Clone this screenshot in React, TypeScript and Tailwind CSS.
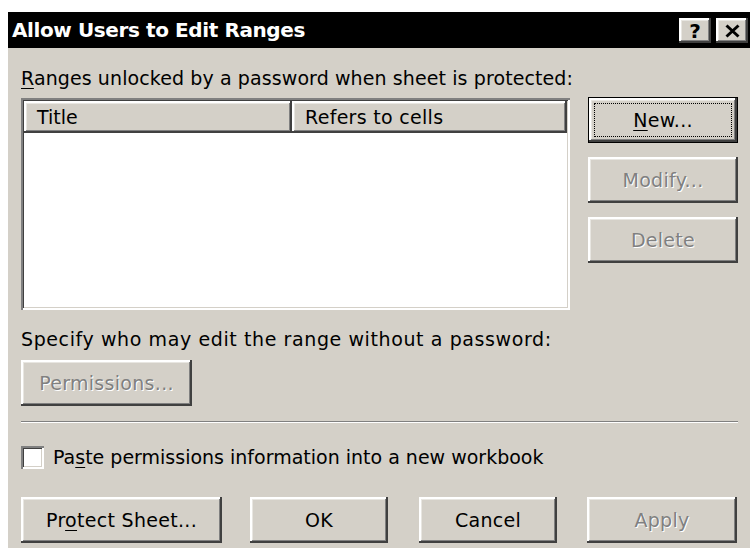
import React from "react";

const font = { fontFamily: '"DejaVu Sans", Verdana, sans-serif' };

// Classic raised 3D bevel used by dialog buttons
const raised =
  "bg-[#d4d0c8] shadow-[inset_-2px_-2px_0_#404040,inset_2px_2px_0_#ffffff,inset_-3px_-3px_0_#808080,inset_3px_3px_0_#e8e6e1]";

// Sunken bevel used by the list view and the check box
const sunken =
  "shadow-[inset_2px_2px_0_#808080,inset_-2px_-2px_0_#ffffff,inset_3px_3px_0_#404040,inset_-3px_-3px_0_#d4d0c8]";

function Btn({
  children,
  w,
  disabled,
  isDefault,
}: {
  children: React.ReactNode;
  w: string;
  disabled?: boolean;
  isDefault?: boolean;
}) {
  const text = disabled
    ? "text-[#808080] [text-shadow:1px_1px_0_#ffffff]"
    : "text-black";
  if (isDefault) {
    return (
      <div className={`${w} h-[46px] border border-black`}>
        <div className={`${raised} w-full h-full p-[5px]`}>
          <div
            className={`w-full h-full border border-dotted border-black flex items-center justify-center text-[19px] tracking-[0.3px] ${text}`}
          >
            {children}
          </div>
        </div>
      </div>
    );
  }
  return (
    <div
      className={`${raised} ${w} h-[46px] flex items-center justify-center text-[19px] tracking-[0.3px] ${text}`}
    >
      {children}
    </div>
  );
}

function CaptionBtn({ children }: { children: React.ReactNode }) {
  return (
    <div
      className={`${raised} w-[32px] h-[25px] flex items-center justify-center text-black font-bold text-[20px] leading-none`}
    >
      {children}
    </div>
  );
}

function Key({ children }: { children: React.ReactNode }) {
  return <span className="underline underline-offset-[3px]">{children}</span>;
}

export default function App() {
  return (
    <div className="w-[750px] h-[548px] bg-white pt-[12px] pl-[8px] overflow-hidden" style={font}>
      <div className="w-[742px] h-[536px] bg-[#d4d0c8] flex flex-col">
        {/* caption bar */}
        <div className="h-[36px] bg-black flex items-center pl-[4px] pr-[2px] shrink-0">
          <span className="text-white font-bold text-[20px] tracking-[-0.4px] flex-1">
            Allow Users to Edit Ranges
          </span>
          <div className="flex gap-[5px] mt-[1px]">
            <CaptionBtn>?</CaptionBtn>
            <CaptionBtn>
              <svg width="15" height="14" viewBox="0 0 15 14">
                <path d="M1.5 1.5 L13.5 12.5 M13.5 1.5 L1.5 12.5" stroke="#000" strokeWidth="3" />
              </svg>
            </CaptionBtn>
          </div>
        </div>

        <div className="pl-[13px] pr-[12px] text-[19px] text-black">
          <div className="h-[24px] mt-[18px] leading-[24px] tracking-[0.1px]">
            <Key>R</Key>anges unlocked by a password when sheet is protected:
          </div>

          <div className="flex gap-[18px] mt-[8px]">
            {/* list view */}
            <div className={`w-[549px] h-[212px] bg-white ${sunken} p-[3px]`}>
              <div className="flex h-[32px]">
                <div className={`${raised} w-[268px] h-full flex items-center pl-[13px]`}>Title</div>
                <div className={`${raised} flex-1 h-full flex items-center pl-[13px] tracking-[0.3px]`}>
                  Refers to cells
                </div>
              </div>
            </div>

            <div className="flex flex-col gap-[14px] -mt-[1px]">
              <Btn w="w-[150px]" isDefault>
                <span>
                  <Key>N</Key>ew...
                </span>
              </Btn>
              <Btn w="w-[150px]" disabled>Modify...</Btn>
              <Btn w="w-[150px]" disabled>Delete</Btn>
            </div>
          </div>

          <div className="h-[24px] mt-[17px] leading-[24px] tracking-[0.6px]">
            Specify who may edit the range without a password:
          </div>
          <div className="mt-[9px]">
            <Btn w="w-[171px]" disabled>Permissions...</Btn>
          </div>

          <div className="mt-[15px] h-[2px] border-t border-[#808080] border-b border-b-white" />

          <div className="flex items-center gap-[9px] mt-[23px] h-[23px]">
            <div className={`w-[23px] h-[23px] bg-white ${sunken}`} />
            <span>
              Pa<Key>s</Key>te permissions information into a new workbook
            </span>
          </div>

          <div className="flex mt-[28px]">
            <Btn w="w-[201px]">
              <span>
                Pr<Key>o</Key>tect Sheet...
              </span>
            </Btn>
            <div className="ml-[28px]">
              <Btn w="w-[138px]">OK</Btn>
            </div>
            <div className="ml-[31px]">
              <Btn w="w-[138px]">Cancel</Btn>
            </div>
            <div className="ml-[30px]">
              <Btn w="w-[150px]" disabled>Apply</Btn>
            </div>
          </div>
        </div>
      </div>
    </div>
  );
}
